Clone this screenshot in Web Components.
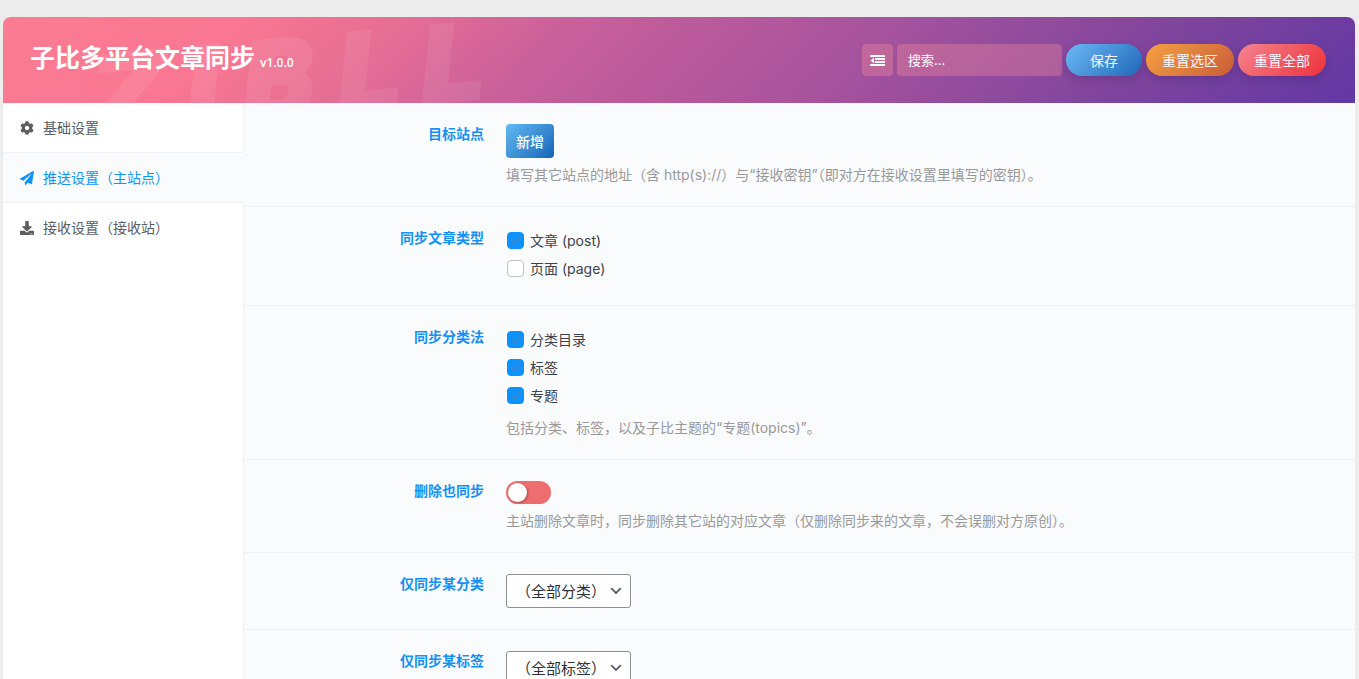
<!DOCTYPE html>
<html lang="zh-CN">
<head>
<meta charset="utf-8">
<meta name="viewport" content="width=device-width, initial-scale=1">
<title>子比多平台文章同步</title>
<style>
  html { background: #ecedec; scrollbar-width: none; }
  body {
    margin: 17px 4px 0 3px;
    font: 14px/21px Inter, "Noto Sans CJK SC", sans-serif;
    color: #3c434a;
  }
</style>
</head>
<body>
<sync-settings></sync-settings>
<script>
const define = (name, html, setup) => {
  const template = document.createElement('template');
  template.innerHTML = html;
  customElements.define(name, class extends HTMLElement {
    constructor() {
      super();
      this.attachShadow({ mode: 'open' }).append(template.content.cloneNode(true));
    }
    connectedCallback() { if (setup) setup(this, this.shadowRoot); }
  });
};

const ICONS = {
  cog: ['0 0 512 512', 'M487.4 315.7l-42.6-24.6c4.3-23.2 4.3-47 0-70.2l42.6-24.6c4.9-2.8 7.1-8.6 5.5-14-11.1-35.6-30-67.8-54.7-94.6-3.8-4.1-10-5.1-14.8-2.3L380.8 110c-17.9-15.4-38.5-27.3-60.8-35.1V25.8c0-5.6-3.9-10.5-9.4-11.7-36.7-8.2-74.3-7.8-109.2 0-5.5 1.2-9.4 6.1-9.4 11.7V75c-22.2 7.9-42.8 19.8-60.8 35.1L88.7 85.5c-4.9-2.8-11-1.9-14.8 2.3-24.7 26.7-43.6 58.9-54.7 94.6-1.7 5.4.6 11.2 5.5 14L67.3 221c-4.3 23.2-4.3 47 0 70.2l-42.6 24.6c-4.9 2.8-7.1 8.6-5.5 14 11.1 35.6 30 67.8 54.7 94.6 3.8 4.1 10 5.1 14.8 2.3l42.6-24.6c17.9 15.4 38.5 27.3 60.8 35.1v49.2c0 5.6 3.9 10.5 9.4 11.7 36.7 8.2 74.3 7.8 109.2 0 5.5-1.2 9.4-6.1 9.4-11.7v-49.2c22.2-7.9 42.8-19.8 60.8-35.1l42.6 24.6c4.9 2.8 11 1.9 14.8-2.3 24.7-26.7 43.6-58.9 54.7-94.6 1.5-5.5-.7-11.3-5.6-14.1zM256 336c-44.1 0-80-35.9-80-80s35.9-80 80-80 80 35.9 80 80-35.9 80-80 80z'],
  plane: ['0 0 512 512', 'M476 3.2L12.5 270.6c-18.1 10.4-15.8 35.6 2.2 43.2L121 358.4l287.3-253.2c5.5-4.9 13.3 2.6 8.6 8.3L176 407v80.5c0 23.6 28.5 32.9 42.5 15.8L282 426l124.6 52.2c14.2 6 30.4-2.9 33-18.2l72-432C515 7.8 493.3-6.8 476 3.2z'],
  download: ['0 0 512 512', 'M216 0h80c13.3 0 24 10.7 24 24v168h87.7c17.8 0 26.7 21.5 14.1 34.1L269.7 378.3c-7.5 7.5-19.8 7.5-27.3 0L90.1 226.1c-12.6-12.6-3.7-34.1 14.1-34.1H192V24c0-13.3 10.7-24 24-24zm296 376v112c0 13.3-10.7 24-24 24H24c-13.3 0-24-10.7-24-24V376c0-13.3 10.7-24 24-24h146.7l49 49c20.1 20.1 52.5 20.1 72.6 0l49-49H488c13.3 0 24 10.7 24 24zm-124 88c0-11-9-20-20-20s-20 9-20 20 9 20 20 20 20-9 20-20zm64 0c0-11-9-20-20-20s-20 9-20 20 9 20 20 20 20-9 20-20z'],
  outdent: ['0 0 15 15', 'M0 2h15v2H0zM5 5h10v2H5zM5 8h10v2H5zM0 11h15v2H0zM4 4.6v5.8L.6 7.5z'],
  chevron: ['0 0 20 20', 'M5 6l5 5 5-5 2 1-7 7-7-7z']
};

define('sync-icon', `
  <style>
    :host { display: inline-flex; width: 14px; height: 14px; flex: none; }
    svg { width: 100%; height: 100%; fill: currentColor; }
  </style>
  <svg aria-hidden="true"><path/></svg>`, (host, root) => {
  const [box, d] = ICONS[host.getAttribute('name')];
  root.querySelector('svg').setAttribute('viewBox', box);
  root.querySelector('path').setAttribute('d', d);
});

define('sync-button', `
  <style>
    :host { display: block; --from: #6cbaf5; --to: #1f67b8; --pad: 16px; --round: 16px; --tall: 32px; --glow: 0 4px 10px rgb(30 20 80 / .2); }
    :host([kind="save"]) { --pad: 24px; }
    :host([kind="section"]) { --from: #f5a142; --to: #c95c38; }
    :host([kind="all"]) { --from: #f58591; --to: #ec3038; }
    :host([kind="add"]) { --from: #63b9f4; --to: #1566b7; --pad: 10px; --round: 4px; --tall: 34px; --glow: none; }
    button {
      display: block; height: var(--tall); padding: 0 var(--pad); border: 0;
      border-radius: var(--round); box-shadow: var(--glow);
      background: linear-gradient(135deg, var(--from), var(--to));
      color: #f4f6fb; font: inherit; white-space: nowrap; cursor: pointer;
    }
    :host([kind="add"]) button { font-weight: 500; color: #fff; }
  </style>
  <button type="button"><slot></slot></button>`);

define('sync-header', `
  <style>
    :host {
      display: flex; align-items: center; justify-content: space-between; gap: 20px;
      position: relative; overflow: hidden; padding: 27px 29px 27px 27px; border-radius: 8px 8px 0 0;
      background: linear-gradient(135deg, #fb7b92 0, #f97893 17%, #e26c95 30%, #c9609a 40%, #a6539d 62%, #80459d 82%, #6238a4 100%);
      color: #fff;
    }
    .mark {
      position: absolute; left: 90px; top: 11px; display: flex; gap: 18px; transform: rotate(-5deg);
      font: italic bold 102px/102px "DejaVu Sans", sans-serif; -webkit-text-stroke: 5px #fff; opacity: .07;
      pointer-events: none; user-select: none;
    }
    h1 {
      position: relative; display: flex; align-items: baseline; gap: 5px;
      margin: 0 0 4px; font-size: 25px; line-height: 28px; font-weight: 600;
    }
    small { font: 600 12px/16px "Open Sans", sans-serif; }
    form { position: relative; display: flex; gap: 4px; margin: 0; }
    .fold, input {
      box-sizing: border-box; height: 32px; border: 0; border-radius: 4px;
      background: rgb(255 145 155 / .32); color: #fff; font: inherit;
    }
    .fold { display: grid; place-items: center; width: 31px; padding: 0; }
    .fold sync-icon { width: 15px; height: 15px; }
    input { width: 165px; padding: 0 11px; font-size: 13px; }
    input::placeholder { color: #fff; opacity: 1; }
  </style>
  <span class="mark" aria-hidden="true"><span>Z</span><span>I</span><span>B</span><span>L</span><span>L</span></span>
  <h1>子比多平台文章同步 <small>v1.0.0</small></h1>
  <form>
    <button class="fold" type="button" aria-label="展开全部"><sync-icon name="outdent"></sync-icon></button>
    <input type="search" placeholder="搜索..." aria-label="搜索">
    <sync-button kind="save">保存</sync-button>
    <sync-button kind="section">重置选区</sync-button>
    <sync-button kind="all">重置全部</sync-button>
  </form>`);

define('sync-nav-item', `
  <style>
    :host { display: block; }
    a {
      display: flex; align-items: center; gap: 9px; box-sizing: border-box; height: 50px; padding: 0 17px;
      border-bottom: 1px solid #f1f2f4; color: #5b5d61; text-decoration: none;
    }
    :host(:last-of-type) a { border-bottom-color: transparent; }
    :host([current]) a { margin-right: -1px; background: #fafbfd; color: #1094f6; }
  </style>
  <a href="#"><slot name="icon"></slot><span><slot></slot></span></a>`);

define('sync-field', `
  <style>
    :host {
      display: grid; grid-template-columns: 240px 1fr; column-gap: 22px; align-items: start;
      padding: 21px 0; border-bottom: 1px solid #eff0f3;
    }
    .title { text-align: right; font-weight: 600; line-height: 20px; color: #1591f3; }
    .body { display: flex; flex-direction: column; align-items: flex-start; }
    ::slotted(p) { margin: 6px 0 0; color: #999; }
  </style>
  <div class="title"><slot name="title"></slot></div>
  <div class="body"><slot></slot></div>`);

define('sync-check', `
  <style>
    :host { display: block; margin-bottom: 4px; }
    label { display: flex; align-items: center; gap: 6px; height: 24px; }
    input {
      appearance: none; display: grid; place-items: center; box-sizing: border-box;
      width: 17px; height: 17px; margin: 0 0 0 1px; border: 1px solid #bfc1c5; border-radius: 4px; background: #fff;
    }
    input:checked { background: #0d91fb; border-color: #0d91fb; }
    input:checked::before {
      content: ""; width: 4px; height: 8px; margin-bottom: 2px;
      border: solid #3a86cf; border-width: 0 2px 2px 0; transform: rotate(40deg);
    }
  </style>
  <label><input type="checkbox"><span><slot></slot></span></label>`, (host, root) => {
  root.querySelector('input').checked = host.hasAttribute('checked');
});

define('sync-settings', `
  <style>
    :host { display: block; border-radius: 8px 8px 0 0; background: #fff; box-shadow: 0 0 10px rgb(0 0 0 / .08); }
    .main { display: grid; grid-template-columns: 241px 1fr; }
    nav { border-right: 1px solid #eff0f2; }
    .content { background: #fafbfd; }
    .switch {
      appearance: none; box-sizing: border-box; width: 45px; height: 23px; margin: 0; padding: 2px;
      border-radius: 12px; background: #ee6e70;
    }
    .switch::before {
      content: ""; display: block; width: 19px; height: 19px; border-radius: 50%;
      background: #fff; box-shadow: 1px 1px 3px rgb(0 0 0 / .3);
    }
    .switch:checked { background: #0d91fb; }
    .switch:checked::before { margin-left: auto; }
    .pick { display: inline-grid; align-items: center; }
    .pick > * { grid-area: 1 / 1; }
    .pick sync-icon { justify-self: end; width: 16px; height: 16px; margin-right: 7px; pointer-events: none; color: #50575e; }
    select {
      appearance: none; box-sizing: border-box; height: 34px; padding: 0 23px 0 9px;
      border: 1px solid #8c8f94; border-radius: 3px; background: #fff; color: #2c3338;
      font: inherit; font-size: 15px;
    }
  </style>
  <sync-header></sync-header>
  <div class="main">
    <nav>
      <sync-nav-item><sync-icon slot="icon" name="cog"></sync-icon>基础设置</sync-nav-item>
      <sync-nav-item current><sync-icon slot="icon" name="plane"></sync-icon>推送设置（主站点）</sync-nav-item>
      <sync-nav-item><sync-icon slot="icon" name="download"></sync-icon>接收设置（接收站）</sync-nav-item>
    </nav>
    <div class="content">
      <sync-field>
        <span slot="title">目标站点</span>
        <sync-button kind="add">新增</sync-button>
        <p>填写其它站点的地址（含 http(s)://）与“接收密钥”（即对方在接收设置里填写的密钥）。</p>
      </sync-field>
      <sync-field>
        <span slot="title">同步文章类型</span>
        <sync-check checked>文章 (post)</sync-check>
        <sync-check>页面 (page)</sync-check>
      </sync-field>
      <sync-field>
        <span slot="title">同步分类法</span>
        <sync-check checked>分类目录</sync-check>
        <sync-check checked>标签</sync-check>
        <sync-check checked>专题</sync-check>
        <p>包括分类、标签，以及子比主题的“专题(topics)”。</p>
      </sync-field>
      <sync-field>
        <label slot="title" for="sync-delete">删除也同步</label>
        <input class="switch" type="checkbox" role="switch" id="sync-delete">
        <p>主站删除文章时，同步删除其它站的对应文章（仅删除同步来的文章，不会误删对方原创）。</p>
      </sync-field>
      <sync-field>
        <label slot="title" for="only-category">仅同步某分类</label>
        <div class="pick">
          <select id="only-category"><option>（全部分类）</option></select>
          <sync-icon name="chevron"></sync-icon>
        </div>
      </sync-field>
      <sync-field>
        <label slot="title" for="only-tag">仅同步某标签</label>
        <div class="pick">
          <select id="only-tag"><option>（全部标签）</option></select>
          <sync-icon name="chevron"></sync-icon>
        </div>
      </sync-field>
    </div>
  </div>`);
</script>
</body>
</html>
